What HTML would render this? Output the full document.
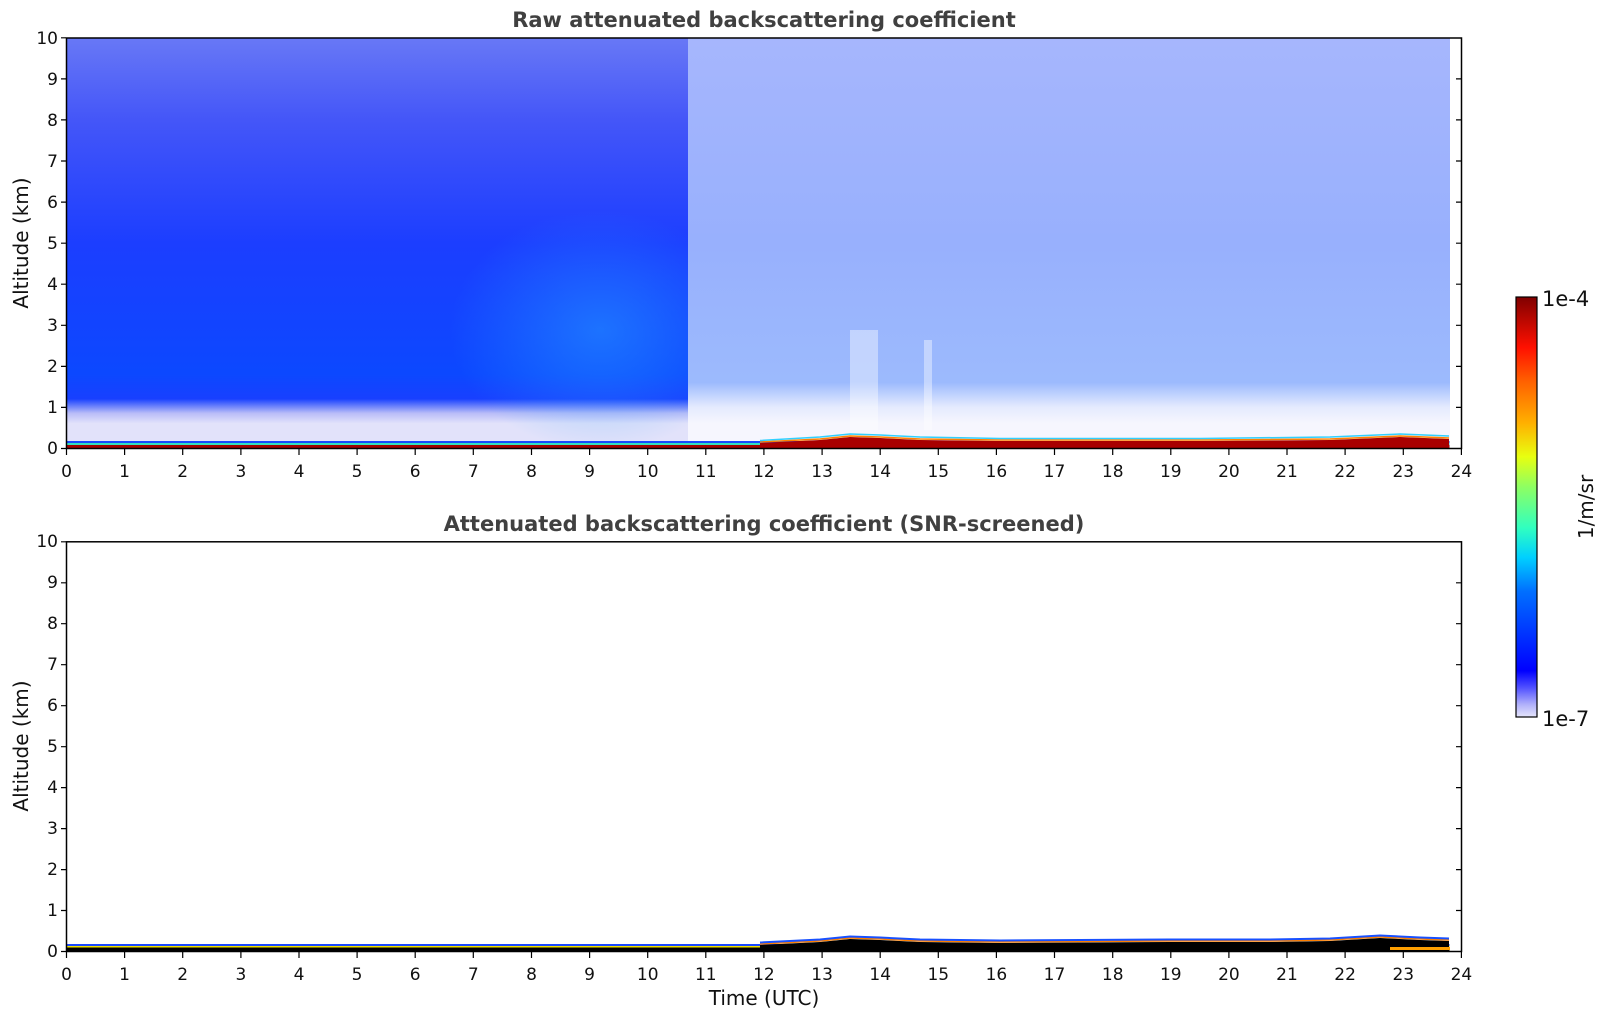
<!DOCTYPE html>
<html><head><meta charset="utf-8"><style>
html,body{margin:0;padding:0;background:#fff;width:1606px;height:1020px;overflow:hidden}
svg text{font-family:"DejaVu Sans","Liberation Sans",sans-serif;fill:#111}
</style></head><body>
<svg width="1606" height="1020" viewBox="0 0 1606 1020" xmlns="http://www.w3.org/2000/svg">
<defs>
<linearGradient id="gl" x1="0" y1="38" x2="0" y2="448" gradientUnits="userSpaceOnUse">
<stop offset="0" stop-color="#6878f6"/><stop offset="0.2" stop-color="#4456f8"/>
<stop offset="0.5" stop-color="#1c3eff"/><stop offset="0.82" stop-color="#0c48ff"/>
<stop offset="0.88" stop-color="#1840ff"/><stop offset="0.915" stop-color="#b8bcf8"/>
<stop offset="0.94" stop-color="#e2e2fa"/><stop offset="1" stop-color="#e2e2fa"/>
</linearGradient>
<linearGradient id="gr" x1="0" y1="38" x2="0" y2="448" gradientUnits="userSpaceOnUse">
<stop offset="0" stop-color="#a6b6fd"/><stop offset="0.5" stop-color="#98b0fd"/>
<stop offset="0.84" stop-color="#9cbafd"/><stop offset="0.9" stop-color="#e4eafe"/>
<stop offset="0.94" stop-color="#f6f6fe"/><stop offset="1" stop-color="#f6f6fe"/>
</linearGradient>
<radialGradient id="cy" cx="600" cy="330" r="150" gradientUnits="userSpaceOnUse" gradientTransform="translate(600 330) scale(1 0.8) translate(-600 -330)">
<stop offset="0" stop-color="#28a0ff" stop-opacity="0.5"/><stop offset="1" stop-color="#28a0ff" stop-opacity="0"/>
</radialGradient>
<linearGradient id="jet" x1="0" y1="717" x2="0" y2="297" gradientUnits="userSpaceOnUse">
<stop offset="0" stop-color="#e4e4fa"/><stop offset="0.03" stop-color="#b0b0fa"/>
<stop offset="0.07" stop-color="#5050ff"/><stop offset="0.11" stop-color="#0000ff"/>
<stop offset="0.3" stop-color="#0070ff"/><stop offset="0.38" stop-color="#00d0ff"/>
<stop offset="0.45" stop-color="#30ffc0"/><stop offset="0.55" stop-color="#90ff60"/>
<stop offset="0.62" stop-color="#e8ff10"/><stop offset="0.7" stop-color="#ffb000"/>
<stop offset="0.8" stop-color="#ff6000"/><stop offset="0.88" stop-color="#ff1000"/>
<stop offset="1" stop-color="#800000"/>
</linearGradient>
</defs>

<!-- TOP PLOT -->
<text x="764" y="27" text-anchor="middle" font-size="21" font-weight="bold" style="fill:#404040">Raw attenuated backscattering coefficient</text>
<rect x="66.5" y="38" width="622" height="410.5" fill="url(#gl)"/>
<rect x="66.5" y="38" width="622" height="410.5" fill="url(#cy)"/>
<rect x="688" y="38" width="762" height="410.5" fill="url(#gr)"/>
<rect x="850" y="330" width="28" height="100" fill="#fff" opacity="0.4"/>
<rect x="924" y="340" width="8" height="90" fill="#fff" opacity="0.4"/>
<!-- ground strip -->
<rect x="66.5" y="441" width="1383" height="2" fill="#1848ff"/>
<rect x="66.5" y="443" width="1383" height="2" fill="#30e0c0"/>
<rect x="66.5" y="445" width="1383" height="3.5" fill="#a00000"/>
<path d="M760 443 L820 440 L850 437 L880 438 L920 440 L1000 441 L1200 441 L1330 440 L1400 437 L1449 439 L1449 448.5 L760 448.5Z" fill="#a80000"/>
<path d="M760 442 L820 439 L850 436 L880 437 L920 439 L1000 440 L1200 440 L1330 439 L1400 436 L1449 438" fill="none" stroke="#ff8000" stroke-width="1.5"/>
<path d="M760 440.5 L820 437 L850 434 L880 435 L920 437 L1000 438.5 L1200 438.5 L1330 437 L1400 434 L1449 436" fill="none" stroke="#30d0ff" stroke-width="1.5"/>
<rect x="66.5" y="38" width="1395" height="410.5" fill="none" stroke="#000" stroke-width="1.5"/>
<g stroke="#000" stroke-width="1.2">
<path d="M61 448.5h5M61 407.4h5M61 366.4h5M61 325.3h5M61 284.2h5M61 243.2h5M61 202.1h5M61 161h5M61 119.9h5M61 78.9h5M61 37.8h5"/>
<path d="M1456 407.4h5M1456 366.4h5M1456 325.3h5M1456 284.2h5M1456 243.2h5M1456 202.1h5M1456 161h5M1456 119.9h5M1456 78.9h5"/>
<path d="M66.5 449v6M124.6 449v6M182.7 449v6M240.9 449v6M299 449v6M357.1 449v6M415.2 449v6M473.3 449v6M531.5 449v6M589.6 449v6M647.7 449v6M705.8 449v6M763.9 449v6M822.1 449v6M880.2 449v6M938.3 449v6M996.4 449v6M1054.5 449v6M1112.7 449v6M1170.8 449v6M1228.9 449v6M1287 449v6M1345.1 449v6M1403.3 449v6M1461.4 449v6"/>
</g>
<g font-size="17" text-anchor="end">
<text x="58" y="454">0</text><text x="58" y="413">1</text><text x="58" y="372">2</text><text x="58" y="331">3</text><text x="58" y="290">4</text><text x="58" y="249">5</text><text x="58" y="208">6</text><text x="58" y="167">7</text><text x="58" y="126">8</text><text x="58" y="85">9</text><text x="58" y="44">10</text>
</g>
<g font-size="17" text-anchor="middle">
<text x="66.5" y="477">0</text><text x="124.6" y="477">1</text><text x="182.7" y="477">2</text><text x="240.9" y="477">3</text><text x="299" y="477">4</text><text x="357.1" y="477">5</text><text x="415.2" y="477">6</text><text x="473.3" y="477">7</text><text x="531.5" y="477">8</text><text x="589.6" y="477">9</text><text x="647.7" y="477">10</text><text x="705.8" y="477">11</text><text x="763.9" y="477">12</text><text x="822.1" y="477">13</text><text x="880.2" y="477">14</text><text x="938.3" y="477">15</text><text x="996.4" y="477">16</text><text x="1054.5" y="477">17</text><text x="1112.7" y="477">18</text><text x="1170.8" y="477">19</text><text x="1228.9" y="477">20</text><text x="1287" y="477">21</text><text x="1345.1" y="477">22</text><text x="1403.3" y="477">23</text><text x="1461.4" y="477">24</text>
</g>
<text transform="translate(28 243) rotate(-90)" text-anchor="middle" font-size="20">Altitude (km)</text>

<!-- BOTTOM PLOT -->
<text x="764" y="531" text-anchor="middle" font-size="21" font-weight="bold" style="fill:#404040">Attenuated backscattering coefficient (SNR-screened)</text>
<rect x="66.5" y="944" width="1383" height="2" fill="#1848ff"/>
<rect x="66.5" y="946" width="1383" height="1.5" fill="#f0e000"/>
<rect x="66.5" y="947.5" width="1383" height="4" fill="#000"/>
<path d="M760 945 L820 942 L850 939 L880 940 L920 942 L1000 943 L1170 942 L1270 942 L1330 941 L1380 938 L1420 940 L1449 941 L1449 951.5 L760 951.5Z" fill="#000"/>
<path d="M760 944 L820 941 L850 938 L880 939 L920 941 L1000 942 L1170 941 L1270 941 L1330 940 L1380 937 L1420 939 L1449 940" fill="none" stroke="#ff8000" stroke-width="1.5"/>
<path d="M760 942.5 L820 939.5 L850 936.5 L880 937.5 L920 939.5 L1000 940.5 L1170 939.5 L1270 939.5 L1330 938.5 L1380 935.5 L1420 937.5 L1449 938.5" fill="none" stroke="#1850ff" stroke-width="2"/>
<rect x="1390" y="947" width="60" height="3" fill="#ffa000"/>
<rect x="66.5" y="541.8" width="1395" height="409.7" fill="none" stroke="#000" stroke-width="1.5"/>
<g stroke="#000" stroke-width="1.2">
<path d="M61 951.5h5M61 910.5h5M61 869.6h5M61 828.6h5M61 787.6h5M61 746.7h5M61 705.7h5M61 664.7h5M61 623.7h5M61 582.8h5M61 541.8h5"/>
<path d="M1456 910.5h5M1456 869.6h5M1456 828.6h5M1456 787.6h5M1456 746.7h5M1456 705.7h5M1456 664.7h5M1456 623.7h5M1456 582.8h5"/>
<path d="M66.5 952v6M124.6 952v6M182.7 952v6M240.9 952v6M299 952v6M357.1 952v6M415.2 952v6M473.3 952v6M531.5 952v6M589.6 952v6M647.7 952v6M705.8 952v6M763.9 952v6M822.1 952v6M880.2 952v6M938.3 952v6M996.4 952v6M1054.5 952v6M1112.7 952v6M1170.8 952v6M1228.9 952v6M1287 952v6M1345.1 952v6M1403.3 952v6M1461.4 952v6"/>
</g>
<g font-size="17" text-anchor="end">
<text x="58" y="957">0</text><text x="58" y="916">1</text><text x="58" y="875">2</text><text x="58" y="834">3</text><text x="58" y="793">4</text><text x="58" y="752">5</text><text x="58" y="711">6</text><text x="58" y="670">7</text><text x="58" y="629">8</text><text x="58" y="588">9</text><text x="58" y="547">10</text>
</g>
<g font-size="17" text-anchor="middle">
<text x="66.5" y="980">0</text><text x="124.6" y="980">1</text><text x="182.7" y="980">2</text><text x="240.9" y="980">3</text><text x="299" y="980">4</text><text x="357.1" y="980">5</text><text x="415.2" y="980">6</text><text x="473.3" y="980">7</text><text x="531.5" y="980">8</text><text x="589.6" y="980">9</text><text x="647.7" y="980">10</text><text x="705.8" y="980">11</text><text x="763.9" y="980">12</text><text x="822.1" y="980">13</text><text x="880.2" y="980">14</text><text x="938.3" y="980">15</text><text x="996.4" y="980">16</text><text x="1054.5" y="980">17</text><text x="1112.7" y="980">18</text><text x="1170.8" y="980">19</text><text x="1228.9" y="980">20</text><text x="1287" y="980">21</text><text x="1345.1" y="980">22</text><text x="1403.3" y="980">23</text><text x="1461.4" y="980">24</text>
</g>
<text transform="translate(28 746) rotate(-90)" text-anchor="middle" font-size="20">Altitude (km)</text>
<text x="764" y="1005" text-anchor="middle" font-size="20">Time (UTC)</text>

<!-- COLORBAR -->
<rect x="1516" y="297" width="21" height="420" fill="url(#jet)" stroke="#000" stroke-width="1.2"/>
<text x="1542" y="306" font-size="21">1e-4</text>
<text x="1542" y="726" font-size="21">1e-7</text>
<text transform="translate(1593 507) rotate(-90)" text-anchor="middle" font-size="20">1/m/sr</text>
</svg>
</body></html>
